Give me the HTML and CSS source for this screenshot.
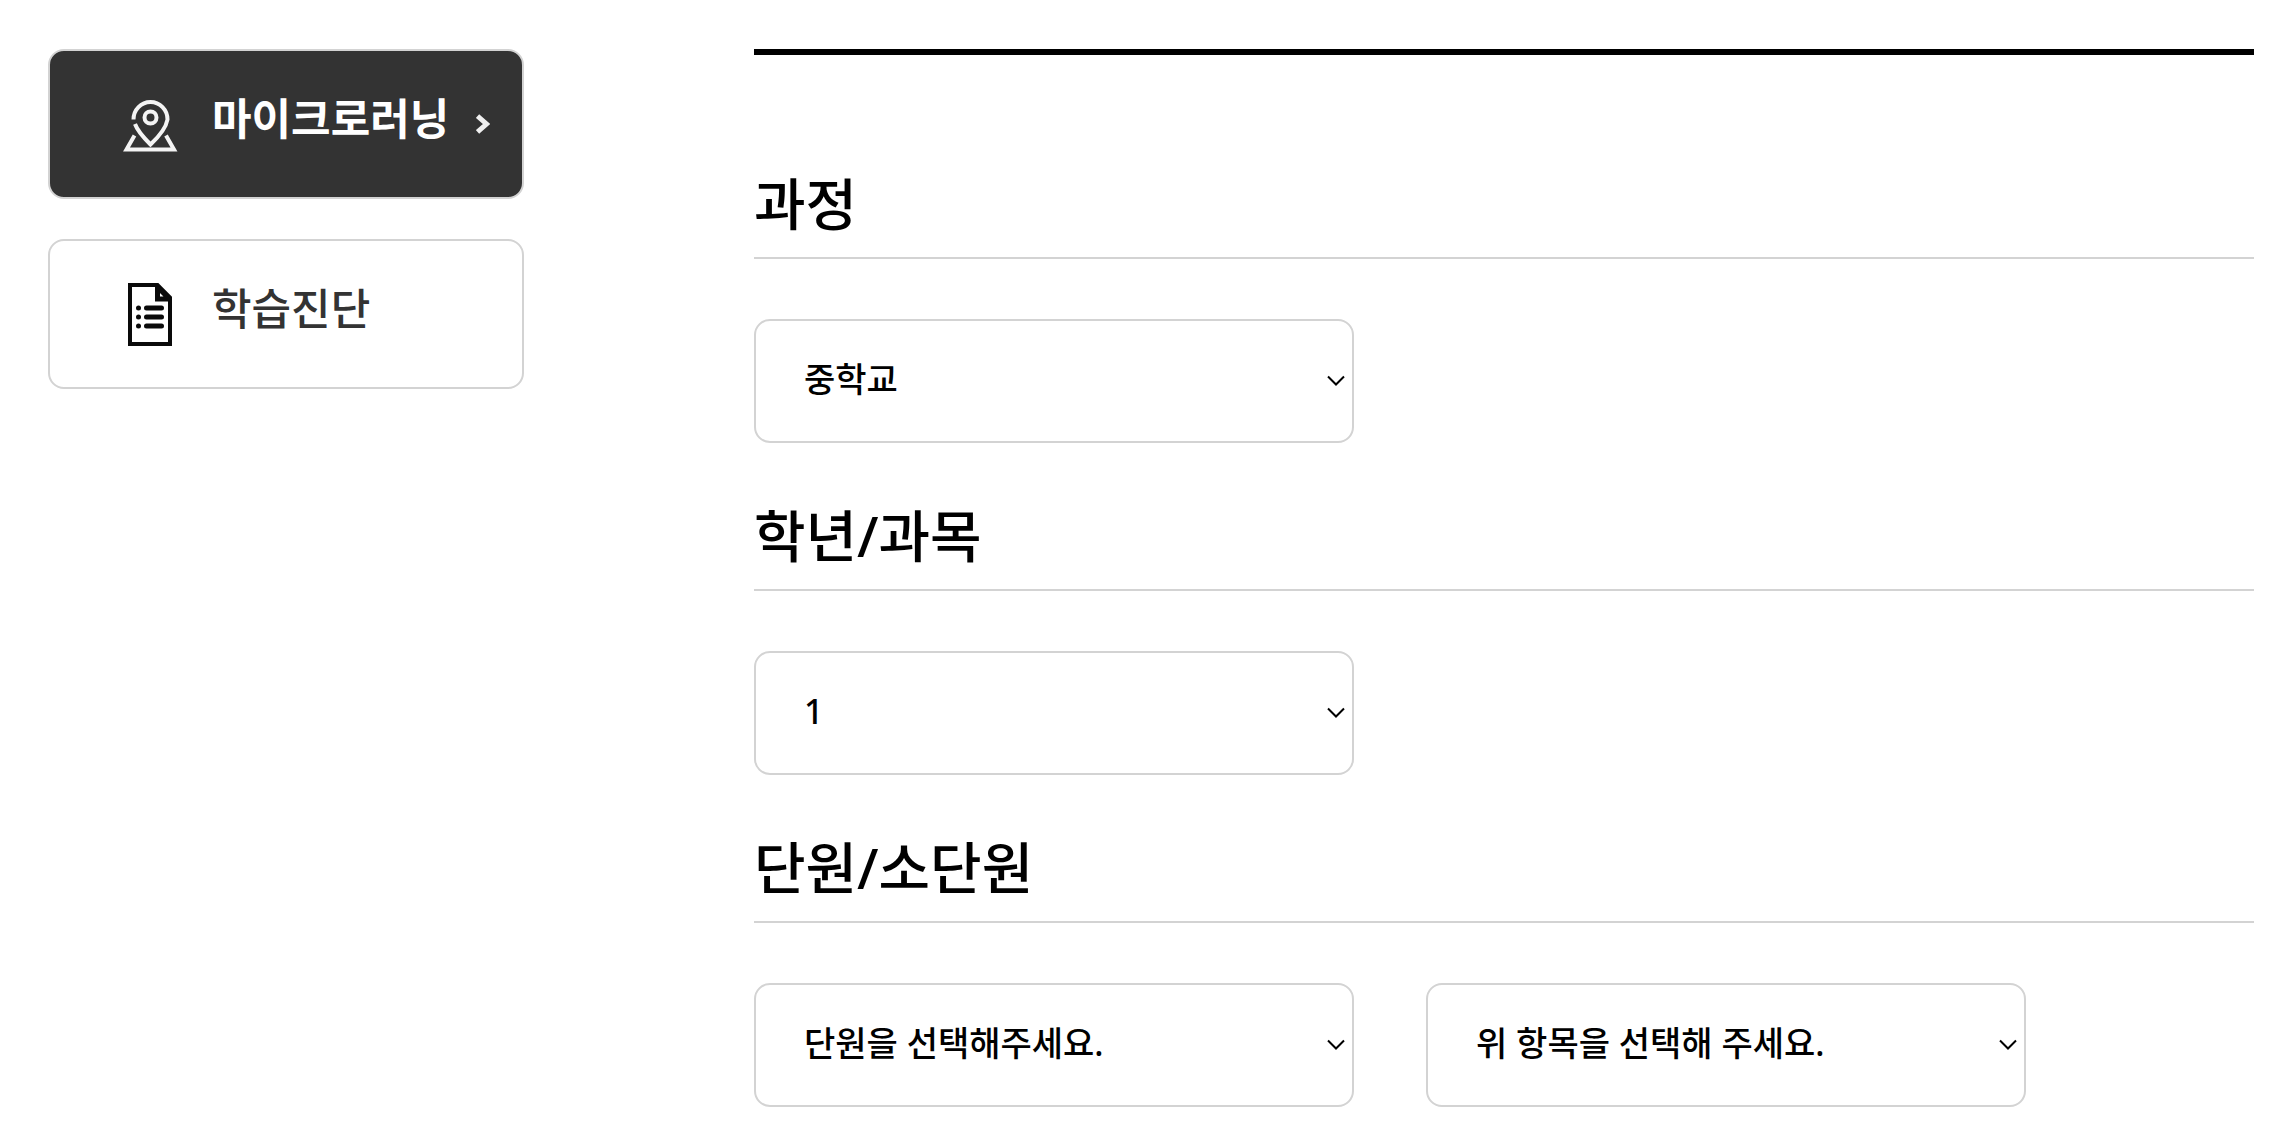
FILE: index.html
```html
<!DOCTYPE html>
<html lang="ko">
<head>
<meta charset="utf-8">
<meta name="viewport" content="width=device-width, initial-scale=1">
<title>마이크로러닝</title>
<link rel="stylesheet" href="styles.css">
</head>
<body>
<div class="page">
  <nav class="side">
    <a class="side-link active" href="#micro" aria-current="page">
      <svg class="side-icon" viewBox="0 0 64 64" fill="none" stroke="#f4f4f4" stroke-width="4" aria-hidden="true">
        <path d="M15.500 27.500A17 17.500 0 1 1 49.500 27.500C48 36 41 44.500 32.500 52.500C26 46 19.500 39 17 32"/>
        <circle cx="32.500" cy="25.500" r="6"/>
        <path d="M16.500 43.500 8.500 57.500H56L48 43.500"/>
      </svg>
      <span class="side-text">마이크로러닝</span>
      <svg class="side-arrow" viewBox="0 0 14 20" fill="none" stroke="#f0f0f0" stroke-width="5" aria-hidden="true">
        <path d="M1.500 2 10.500 10 1.500 18"/>
      </svg>
    </a>
    <a class="side-link" href="#diagnosis">
      <svg class="side-icon" viewBox="0 0 64 64" fill="none" stroke="#0a0a0a" stroke-width="4" aria-hidden="true">
        <path d="M12 3H39.500L52 15.500V62H12Z"/>
        <path d="M39.500 3V17H52M39 4.500 51 16.500" stroke-width="5"/>
        <path d="M28.500 26H43.500M28.500 35H43.500M28.500 44H43.500" stroke-width="5" stroke-linecap="round"/>
        <path d="M20.500 26H20.510M20.500 35H20.510M20.500 44H20.510" stroke-width="5" stroke-linecap="round"/>
      </svg>
      <span class="side-text">학습진단</span>
    </a>
  </nav>
  <main class="content">
    <section class="field">
      <h2 class="field-title"><label for="course">과정</label></h2>
      <div class="field-row">
        <select class="picker" id="course"><option>중학교</option></select>
      </div>
    </section>
    <section class="field">
      <h2 class="field-title"><label for="grade">학년/과목</label></h2>
      <div class="field-row">
        <select class="picker" id="grade"><option>1</option></select>
      </div>
    </section>
    <section class="field">
      <h2 class="field-title"><label for="unit">단원/소단원</label></h2>
      <div class="field-row">
        <select class="picker" id="unit"><option>단원을 선택해주세요.</option></select>
        <select class="picker" id="subunit" aria-label="소단원"><option>위 항목을 선택해 주세요.</option></select>
      </div>
    </section>
  </main>
</div>
</body>
</html>
```
FILE: styles.css
```css
* {
  box-sizing: border-box;
}

body {
  margin: 0;
  background: #fff;
  color: #000;
  font-family: "Noto Sans", "Noto Sans CJK KR", sans-serif;
  font-weight: 500;
}

.page {
  display: grid;
  grid-template-columns: minmax(0, 476fr) minmax(0, 1500fr);
  column-gap: 230px;
  align-items: start;
  padding: 49px 40px 40px 48px;
}

.side {
  display: grid;
  gap: 40px;
}

.side-link {
  display: flex;
  align-items: center;
  min-height: 150px;
  padding: 0 32px 0 68px;
  border: 2px solid #d3d3d3;
  border-radius: 16px;
  color: #333;
  font-size: 43px;
  line-height: 64px;
  text-decoration: none;
}

.side-link.active {
  background: #333;
  color: #fff;
  font-weight: 700;
}

.side-icon {
  flex: none;
  width: 64px;
  height: 64px;
  margin-right: 30px;
}

.side-text {
  padding-bottom: 10px;
  white-space: nowrap;
}

.side-arrow {
  flex: none;
  width: 14px;
  height: 20px;
  margin-left: auto;
}

.content {
  padding-top: 56px;
  border-top: 6px solid #000;
}

.field {
  padding-top: 50px;
}

.field-title {
  margin: 0 0 60px;
  padding-bottom: 12px;
  border-bottom: 2px solid #d3d3d3;
  font-size: 56px;
  font-weight: 500;
  line-height: 84px;
}

.field-row {
  display: flex;
  gap: 72px;
}

.picker {
  appearance: none;
  width: 40%;
  height: 124px;
  padding: 0 48px 4px;
  border: 2px solid #d3d3d3;
  border-radius: 16px;
  background: #fff url("data:image/svg+xml,%3Csvg xmlns='http://www.w3.org/2000/svg' width='18' height='12' fill='none' stroke='%23000' stroke-width='2'%3E%3Cpath d='M1 1.500 9 9.500 17 1.500'/%3E%3C/svg%3E") no-repeat right 7px center;
  color: #000;
  font-family: inherit;
  font-size: 34px;
  font-weight: 500;
}
```
